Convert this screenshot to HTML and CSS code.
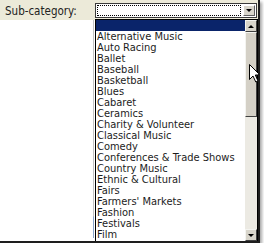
FILE: index.html
```html
<!DOCTYPE html>
<html lang="en">
<head>
    <meta charset="UTF-8">
    <title>Sub-category</title>
    <link rel="stylesheet" href="styles.css">
</head>
<body>
    <div class="shot">
        <div class="bar">
            <label class="field-label" for="subcat">Sub-category:</label>
            <div class="select" id="subcat">
                <div class="select-value"></div>
                <div class="select-button"><span class="arrow-down"></span></div>
            </div>
        </div>

        <div class="page">
            <div class="peek-line"></div>
        </div>

        <!-- open dropdown list -->
        <div class="dropdown">
            <ul class="options">
                <li class="selected"></li>
                <li>Alternative Music</li>
                <li>Auto Racing</li>
                <li>Ballet</li>
                <li>Baseball</li>
                <li>Basketball</li>
                <li>Blues</li>
                <li>Cabaret</li>
                <li>Ceramics</li>
                <li>Charity &amp; Volunteer</li>
                <li>Classical Music</li>
                <li>Comedy</li>
                <li>Conferences &amp; Trade Shows</li>
                <li>Country Music</li>
                <li>Ethnic &amp; Cultural</li>
                <li>Fairs</li>
                <li>Farmers' Markets</li>
                <li>Fashion</li>
                <li>Festivals</li>
                <li>Film</li>
            </ul>
            <div class="scrollbar">
                <div class="sb-button"><span class="arrow-up"></span></div>
                <div class="sb-thumb"></div>
                <div class="sb-track"></div>
                <div class="sb-button"><span class="arrow-down"></span></div>
            </div>
        </div>

        <svg class="cursor" width="12" height="19" viewBox="0 0 12 19">
            <polygon points="0.5,0.5 0.5,15.5 4,12 6.8,18 9,17 6.3,11 11,11" fill="#fff" stroke="#000" stroke-width="1" stroke-linejoin="miter"/>
        </svg>
    </div>
</body>
</html>
```

FILE: styles.css
```css
body {
    margin: 0;
    background: white;
    font-family: "DejaVu Sans Condensed", "DejaVu Sans", sans-serif;
    font-stretch: condensed;
    font-size: 11px;
    color: #1c1c1c;
}

.shot {
    position: relative;
    width: 258px;
    height: 241px;
    overflow: hidden;
    background: white;
    border-right: 2px solid #1e1e1e;
    border-bottom: 2px solid #1e1e1e;
    box-shadow: 2px 2px 3px rgba(0, 0, 0, 0.35);
}

.bar {
    display: grid;
    grid-template-columns: 95px 162px;
    height: 20px;
    background: #ecead9;
}

.field-label {
    padding: 5px 0 0 5px;
    font-size: 11.5px;
    line-height: 12px;
    color: #222;
}

.select {
    display: flex;
    margin-top: 3px;
    height: 13px;
    border: 1px solid #3a3a3a;
    background: white;
}

.select-value {
    flex: 1;
    margin: 1px;
    outline: 1px dotted #000;
    outline-offset: -1px;
}

.select-button {
    display: flex;
    justify-content: center;
    align-items: center;
    width: 10px;
    height: 9px;
    margin: 1px;
    background: #d8d5cb;
    border: 1px solid;
    border-color: #fff #606060 #606060 #fff;
}

.arrow-down,
.arrow-up {
    width: 0;
    height: 0;
    border-left: 3px solid transparent;
    border-right: 3px solid transparent;
}

.arrow-down {
    border-top: 3px solid #000;
}

.arrow-up {
    border-bottom: 3px solid #000;
}

.page {
    height: 221px;
}

.peek-line {
    margin-left: 93px;
    width: 1px;
    height: 218px;
    background: linear-gradient(#c4c4c4 0, #c4c4c4 196px, #8aa6cc 197px, #8aa6cc 100%);
}

.dropdown {
    position: absolute;
    left: 95px;
    top: 19px;
    width: 161px;
    height: 222px;
    display: grid;
    grid-template-columns: 1fr 12px;
    background: white;
    border: 1px solid #000;
}

.options {
    list-style: none;
    margin: 0;
    padding: 0;
}

.options li {
    height: 11px;
    line-height: 11px;
    padding-left: 1px;
    white-space: nowrap;
}

.options .selected {
    background: #0a246a;
}

.scrollbar {
    display: flex;
    flex-direction: column;
    height: 221px;
    background: #eceae3;
}

.sb-button {
    display: flex;
    justify-content: center;
    align-items: center;
    height: 10px;
    background: #d8d5cb;
    border: 1px solid;
    border-color: #f4f4f0 #404040 #404040 #f4f4f0;
}

.sb-thumb {
    height: 83px;
    background: #d4d0c6;
    border: 1px solid;
    border-color: #f4f4f0 #404040 #404040 #f4f4f0;
}

.sb-track {
    flex: 1;
}

.cursor {
    position: absolute;
    left: 249px;
    top: 64px;
}
```
